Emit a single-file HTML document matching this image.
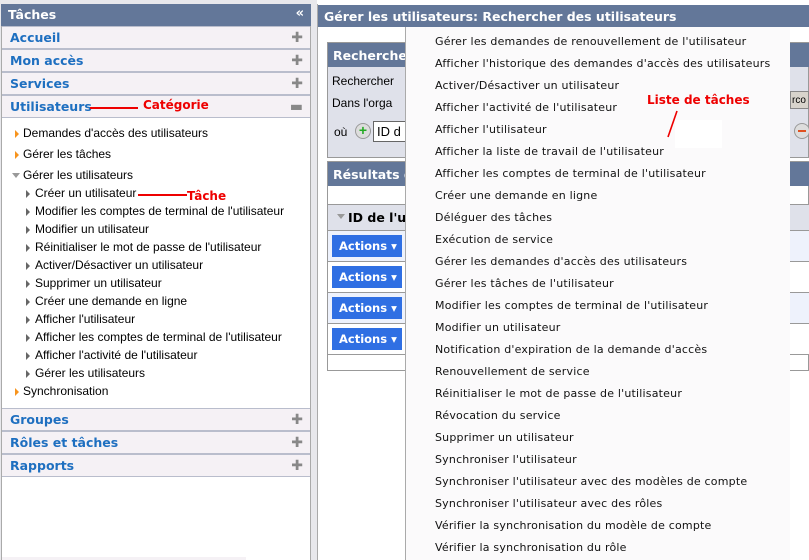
<!DOCTYPE html>
<html><head><meta charset="utf-8"><style>
*{margin:0;padding:0;box-sizing:border-box}
body{width:809px;height:560px;overflow:hidden;background:#fff;font-family:"Liberation Sans",sans-serif;position:relative}
.a{position:absolute}
.hdr{background:#637799;color:#fff;font-family:"DejaVu Sans",sans-serif;font-weight:bold;font-size:12.5px}
.sec{position:absolute;left:2px;width:308px;height:23px;background:#f5f1f5;border-top:1px solid #b9bdcc;border-bottom:1px solid #b9bdcc;color:#1e6fc0;font-family:"DejaVu Sans",sans-serif;font-weight:bold;font-size:12.5px;padding:3px 0 0 8px}
.sec .p{position:absolute;right:7px;top:3px;color:#888;font-weight:normal;font-size:14px}
.t{position:absolute;font-size:12px;color:#000;white-space:nowrap}
.or{position:absolute;width:0;height:0;border-left:4px solid #f7941d;border-top:4px solid transparent;border-bottom:4px solid transparent}
.gr{position:absolute;width:0;height:0;border-left:4px solid #666;border-top:4px solid transparent;border-bottom:4px solid transparent}
.m{position:absolute;left:435px;font-family:"DejaVu Sans",sans-serif;font-size:11px;letter-spacing:0.2px;color:#111;white-space:nowrap}
.act{position:absolute;left:332px;width:70px;height:22px;background:#2f6fe3;color:#fff;font-family:"DejaVu Sans",sans-serif;font-weight:bold;font-size:11.5px;padding:4px 0 0 7px}
.red{color:#e00;font-family:"DejaVu Sans",sans-serif;font-weight:bold;font-size:12px;position:absolute}
</style></head><body>
<div class="a" style="left:0;top:0;width:317px;height:560px;background:#e8e8ec"></div>
<div class="a" style="left:1px;top:4px;width:310px;height:556px;background:#fff;border-left:1px solid #aaa;border-right:1px solid #aaa"></div>
<div class="a hdr" style="left:1px;top:4px;width:310px;height:22px;padding:3px 0 0 7px">Tâches<span style="position:absolute;right:7px;top:2px;font-size:13px">«</span></div>
<div class="sec" style="top:26px">Accueil<span class="p">✚</span></div>
<div class="sec" style="top:49px">Mon accès<span class="p">✚</span></div>
<div class="sec" style="top:72px">Services<span class="p">✚</span></div>
<div class="sec" style="top:95px">Utilisateurs<span class="p">▬</span></div>
<div class="a" style="left:90px;top:107px;width:48px;height:2px;background:#e00"></div>
<div class="red" style="left:143px;top:98px">Catégorie</div>
<div class="or" style="left:15px;top:130px"></div><div class="t" style="left:23px;top:126px">Demandes d'accès des utilisateurs</div>
<div class="or" style="left:15px;top:151px"></div><div class="t" style="left:23px;top:147px">Gérer les tâches</div>
<div class="a" style="left:12px;top:173px;border-top:5px solid #999;border-left:4px solid transparent;border-right:4px solid transparent"></div>
<div class="t" style="left:23px;top:168px">Gérer les utilisateurs</div>
<div class="gr" style="left:26px;top:190px"></div><div class="t" style="left:35px;top:186px">Créer un utilisateur</div>
<div class="a" style="left:138px;top:194px;width:49px;height:2px;background:#e00"></div>
<div class="red" style="left:187px;top:189px">Tâche</div>
<div class="gr" style="left:26px;top:208px"></div><div class="t" style="left:35px;top:204px">Modifier les comptes de terminal de l'utilisateur</div>
<div class="gr" style="left:26px;top:226px"></div><div class="t" style="left:35px;top:222px">Modifier un utilisateur</div>
<div class="gr" style="left:26px;top:244px"></div><div class="t" style="left:35px;top:240px">Réinitialiser le mot de passe de l'utilisateur</div>
<div class="gr" style="left:26px;top:262px"></div><div class="t" style="left:35px;top:258px">Activer/Désactiver un utilisateur</div>
<div class="gr" style="left:26px;top:280px"></div><div class="t" style="left:35px;top:276px">Supprimer un utilisateur</div>
<div class="gr" style="left:26px;top:298px"></div><div class="t" style="left:35px;top:294px">Créer une demande en ligne</div>
<div class="gr" style="left:26px;top:316px"></div><div class="t" style="left:35px;top:312px">Afficher l'utilisateur</div>
<div class="gr" style="left:26px;top:334px"></div><div class="t" style="left:35px;top:330px">Afficher les comptes de terminal de l'utilisateur</div>
<div class="gr" style="left:26px;top:352px"></div><div class="t" style="left:35px;top:348px">Afficher l'activité de l'utilisateur</div>
<div class="gr" style="left:26px;top:370px"></div><div class="t" style="left:35px;top:366px">Gérer les utilisateurs</div>
<div class="or" style="left:15px;top:388px"></div><div class="t" style="left:23px;top:384px">Synchronisation</div>
<div class="sec" style="top:408px">Groupes<span class="p">✚</span></div>
<div class="sec" style="top:431px">Rôles et tâches<span class="p">✚</span></div>
<div class="sec" style="top:454px">Rapports<span class="p">✚</span></div>
<div class="a" style="left:2px;top:557px;width:244px;height:3px;background:#f5f1f5"></div>
<div class="a" style="left:317px;top:4px;width:492px;height:556px;background:#fff;border-left:1px solid #aaa"></div>
<div class="a hdr" style="left:318px;top:5px;width:491px;height:22px;padding:4px 0 0 6px">Gérer les utilisateurs: Rechercher des utilisateurs</div>
<div class="a" style="left:327px;top:42px;width:482px;height:116px;background:#dfe1ea;border:1px solid #999"></div>
<div class="a hdr" style="left:328px;top:43px;width:481px;height:24px;padding:5px 0 0 5px">Rechercher</div>
<div class="t" style="left:332px;top:74px">Rechercher</div>
<div class="t" style="left:332px;top:96px">Dans l'orga</div>
<div class="t" style="left:334px;top:125px">où</div>
<div class="a" style="left:355px;top:123px;width:16px;height:16px;border-radius:50%;background:#ddd;border:1px solid #999;color:#2a2;font-weight:bold;font-size:14px;line-height:13px;text-align:center">+</div>
<div class="a" style="left:373px;top:121px;width:40px;height:21px;background:#fff;border:1px solid #666;font-size:13px;padding:2px 3px">ID d</div>
<div class="a" style="left:790px;top:91px;width:19px;height:18px;background:#d8d4cc;border:1px solid #888;font-size:10px;padding:3px 1px">rco</div>
<div class="a" style="left:794px;top:123px;width:16px;height:16px;border-radius:50%;background:#ddd;border:1px solid #999"></div>
<div class="a" style="left:798px;top:130px;width:8px;height:2px;background:#e05020"></div>
<div class="a" style="left:327px;top:161px;width:482px;height:210px;background:#fff;border:1px solid #999"></div>
<div class="a hdr" style="left:328px;top:162px;width:481px;height:24px;padding:5px 0 0 5px">Résultats d</div>
<div class="a" style="left:328px;top:204px;width:481px;height:27px;background:#dfe1ea;border-top:1px solid #999;border-bottom:1px solid #999;font-family:'DejaVu Sans',sans-serif;font-weight:bold;font-size:12.5px;padding:5px 0 0 20px">ID de l'u</div>
<div class="a" style="left:337px;top:214px;border-top:5px solid #999;border-left:4px solid transparent;border-right:4px solid transparent"></div>
<div class="a" style="left:328px;top:231px;width:481px;height:31px;background:#eef2fc;border-bottom:1px solid #999"></div>
<div class="a" style="left:328px;top:262px;width:481px;height:31px;background:#fff;border-bottom:1px solid #999"></div>
<div class="a" style="left:328px;top:293px;width:481px;height:31px;background:#eef2fc;border-bottom:1px solid #999"></div>
<div class="a" style="left:328px;top:324px;width:481px;height:31px;background:#fff;border-bottom:1px solid #999"></div>
<div class="act" style="top:235px">Actions ▾</div>
<div class="act" style="top:266px">Actions ▾</div>
<div class="act" style="top:297px">Actions ▾</div>
<div class="act" style="top:328px">Actions ▾</div>
<div class="a" style="left:405px;top:27px;width:385px;height:533px;background:#fbfafb;border-left:1px solid #aaa"></div>
<div class="m" style="top:35px">Gérer les demandes de renouvellement de l'utilisateur</div>
<div class="m" style="top:57px">Afficher l'historique des demandes d'accès des utilisateurs</div>
<div class="m" style="top:79px">Activer/Désactiver un utilisateur</div>
<div class="m" style="top:101px">Afficher l'activité de l'utilisateur</div>
<div class="m" style="top:123px">Afficher l'utilisateur</div>
<div class="m" style="top:145px">Afficher la liste de travail de l'utilisateur</div>
<div class="m" style="top:167px">Afficher les comptes de terminal de l'utilisateur</div>
<div class="m" style="top:189px">Créer une demande en ligne</div>
<div class="m" style="top:211px">Déléguer des tâches</div>
<div class="m" style="top:233px">Exécution de service</div>
<div class="m" style="top:255px">Gérer les demandes d'accès des utilisateurs</div>
<div class="m" style="top:277px">Gérer les tâches de l'utilisateur</div>
<div class="m" style="top:299px">Modifier les comptes de terminal de l'utilisateur</div>
<div class="m" style="top:321px">Modifier un utilisateur</div>
<div class="m" style="top:343px">Notification d'expiration de la demande d'accès</div>
<div class="m" style="top:365px">Renouvellement de service</div>
<div class="m" style="top:387px">Réinitialiser le mot de passe de l'utilisateur</div>
<div class="m" style="top:409px">Révocation du service</div>
<div class="m" style="top:431px">Supprimer un utilisateur</div>
<div class="m" style="top:453px">Synchroniser l'utilisateur</div>
<div class="m" style="top:475px">Synchroniser l'utilisateur avec des modèles de compte</div>
<div class="m" style="top:497px">Synchroniser l'utilisateur avec des rôles</div>
<div class="m" style="top:519px">Vérifier la synchronisation du modèle de compte</div>
<div class="m" style="top:541px">Vérifier la synchronisation du rôle</div>
<div class="a" style="left:675px;top:120px;width:47px;height:28px;background:#fff"></div>
<div class="red" style="left:647px;top:93px">Liste de tâches</div>
<svg class="a" style="left:660px;top:108px" width="25" height="35"><path d="M17 3 L8 29" stroke="#e00" stroke-width="1.6" fill="none"/></svg>
</body></html>
